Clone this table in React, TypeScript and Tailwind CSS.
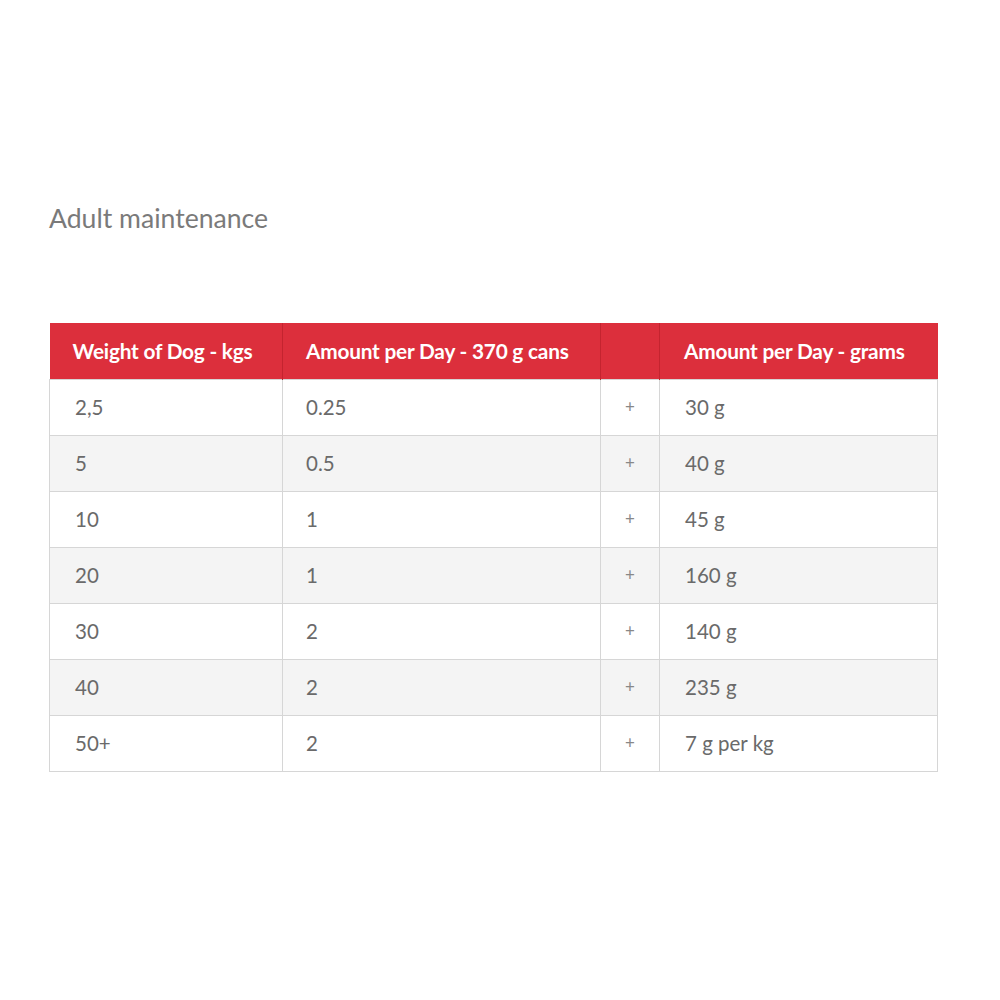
import React from 'react';

const rows = [
  ['2,5', '0.25', '30 g'],
  ['5', '0.5', '40 g'],
  ['10', '1', '45 g'],
  ['20', '1', '160 g'],
  ['30', '2', '140 g'],
  ['40', '2', '235 g'],
  ['50+', '2', '7 g per kg'],
];

export default function App() {
  return (
    <div className="w-[1000px] h-[1000px] bg-white pl-[49px] pt-[201px]" style={{ fontFamily: 'Lato, "Open Sans", sans-serif' }}>
      <h2 className="text-[26.6px] leading-[34px] text-[#7a7a7a] font-normal">Adult maintenance</h2>
      <table className="mt-[88px] w-[888px] border-collapse table-fixed text-[20.5px]">
        <colgroup>
          <col className="w-[233px]" />
          <col className="w-[318px]" />
          <col className="w-[59px]" />
          <col className="w-[278px]" />
        </colgroup>
        <thead>
          <tr className="h-[56px] bg-[#dc2f3c] text-white font-bold text-left text-[20.8px]">
            <th className="pl-[23px] border-r border-[#c4242f] tracking-[-0.2px]">Weight of Dog - kgs</th>
            <th className="pl-[23px] border-r border-[#c4242f] tracking-[-0.2px]">Amount per Day - 370 g cans</th>
            <th className="border-r border-[#c4242f]"></th>
            <th className="pl-[24px] tracking-[-0.2px]">Amount per Day - grams</th>
          </tr>
        </thead>
        <tbody className="text-[#6a6a6a]">
          {rows.map((r, i) => (
            <tr key={i} className={`h-[56px] ${i % 2 === 1 ? 'bg-[#f4f4f4]' : 'bg-white'}`}>
              <td className="pl-[25px] border border-[#d6d6d6]">{r[0]}</td>
              <td className="pl-[23px] border border-[#d6d6d6]">{r[1]}</td>
              <td className="text-center border border-[#d6d6d6] text-[#888] text-[17px]">+</td>
              <td className="pl-[25px] border border-[#d6d6d6]">{r[2]}</td>
            </tr>
          ))}
        </tbody>
      </table>
    </div>
  );
}
